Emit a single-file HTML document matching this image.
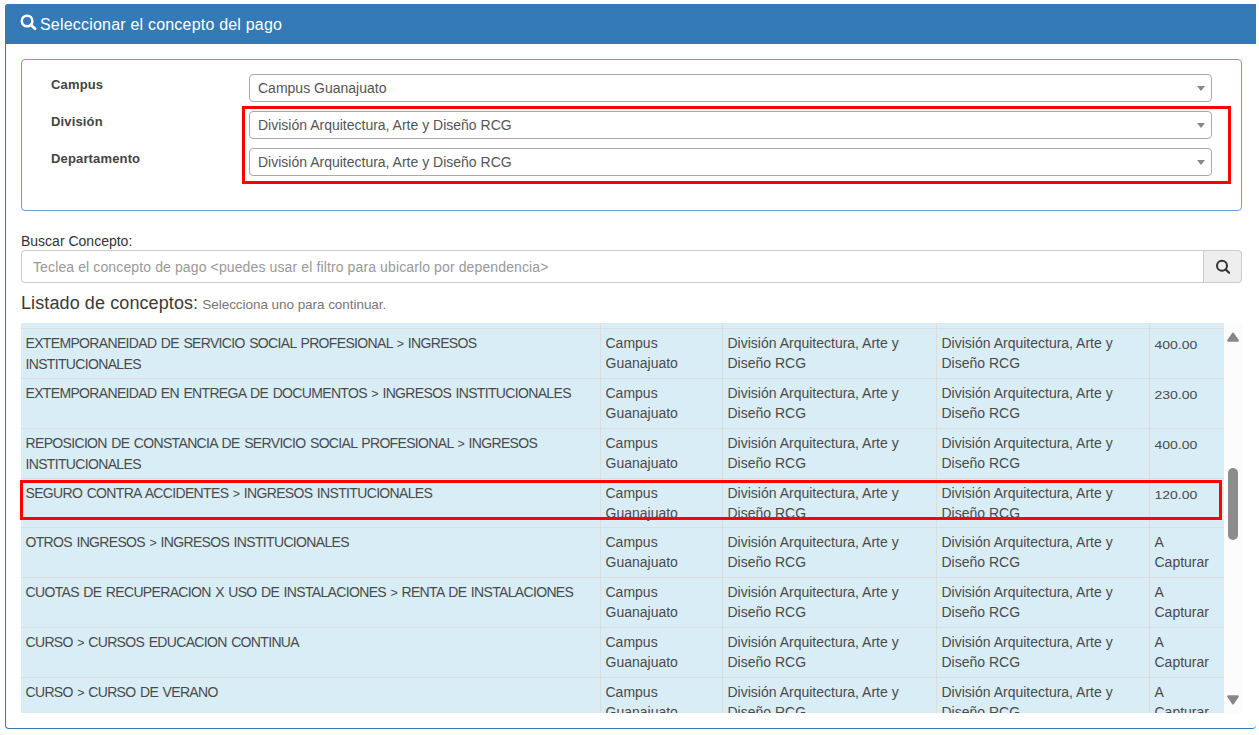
<!DOCTYPE html>
<html><head><meta charset="utf-8">
<style>
*{box-sizing:border-box;margin:0;padding:0}
html,body{width:1259px;height:735px;overflow:hidden;background:#fff}
body{font-family:"Liberation Sans",sans-serif;color:#333;position:relative}
.abs{position:absolute}
#panel{left:5px;top:4px;width:1251px;height:725px;border:1px solid #337ab7;border-radius:4px;border-right:none}
#head{left:5px;top:4px;width:1251px;height:40px;background:#337ab7;border-radius:3px 0 0 0}
#htxt{left:40px;top:15.5px;font-size:16px;color:#fff;line-height:18px;white-space:nowrap;letter-spacing:0.2px}
#inner{left:21px;top:59px;width:1221px;height:152px;border:1px solid #6c9fd6;border-radius:4px}
.lbl{left:51px;font-size:13px;font-weight:bold;color:#444;line-height:15px;white-space:nowrap;letter-spacing:0.15px}
.sel{left:249px;width:963px;height:28px;border:1px solid #aaa;border-radius:4px;background:#fff}
.sel span{position:absolute;left:8px;top:5px;font-size:14px;line-height:16px;color:#555;white-space:nowrap}
.sel i{position:absolute;right:6px;top:11px;width:0;height:0;border-left:4px solid transparent;border-right:4px solid transparent;border-top:5px solid #888}
.red{border:3px solid #f00}
#blbl{left:21px;top:233px;font-size:14px;line-height:16px;color:#333;white-space:nowrap}
#search{left:21px;top:250px;width:1221px;height:33px;border:1px solid #ccc;border-radius:4px;background:#fff}
#ph{left:11px;top:7.5px;font-size:14px;line-height:16px;color:#999;white-space:nowrap;letter-spacing:0.12px}
#addon{right:-1px;top:-1px;width:39px;height:33px;background:#eee;border:1px solid #ccc;border-radius:0 4px 4px 0}
#list{left:21px;top:293px;font-size:18px;line-height:20px;color:#3a3a3a;white-space:nowrap;letter-spacing:0.1px}
#list small{font-size:13.5px;color:#777;letter-spacing:-0.05px;margin-left:-1px}
#tbl{left:21px;top:323px;width:1203px;height:390px;overflow:hidden;background:#d9edf7}
.row{position:absolute;left:0;width:1203px;height:50px;border-top:1px solid #ddd}
.c{position:absolute;top:0;height:50px;padding:4px 5px 4px 4.5px;font-size:14px;line-height:20px;color:#4a4a4a}
.c1{left:0;width:579px;letter-spacing:-0.66px;word-spacing:1.2px}
.c2{left:579px;width:122px;border-left:1px solid #ddd}
.c3{left:701px;width:214px;border-left:1px solid #ddd}
.c4{left:915px;width:213px;border-left:1px solid #ddd}
.c5{left:1128px;width:75px;border-left:1px solid #ddd}
.num{display:inline-block;transform:translateY(1px) scaleY(0.8);transform-origin:50% 80%}
.gt{font-size:12.5px}
#sb{left:1224px;top:323px;width:19px;height:390px;background:#fcfcfc}
#thumb{left:1228px;top:468px;width:10px;height:72px;background:#8c8c8c;border-radius:5px}
</style></head><body>
<div id="panel" class="abs"></div>
<div id="head" class="abs"></div>
<svg class="abs" style="left:18px;top:12px" width="22" height="22" viewBox="0 0 22 22">
  <circle cx="9.1" cy="9.0" r="5.3" fill="none" stroke="#fff" stroke-width="2.5"/>
  <line x1="12.8" y1="12.8" x2="17.0" y2="16.8" stroke="#fff" stroke-width="2.9" stroke-linecap="round"/>
</svg>
<div id="htxt" class="abs">Seleccionar el concepto del pago</div>

<div id="inner" class="abs"></div>
<div class="abs lbl" style="top:77px">Campus</div>
<div class="abs lbl" style="top:114px">División</div>
<div class="abs lbl" style="top:151px">Departamento</div>
<div class="abs sel" style="top:74px"><span>Campus Guanajuato</span><i></i></div>
<div class="abs sel" style="top:111px"><span>División Arquitectura, Arte y Diseño RCG</span><i></i></div>
<div class="abs sel" style="top:148px"><span>División Arquitectura, Arte y Diseño RCG</span><i></i></div>
<div class="abs red" style="left:242px;top:106px;width:989px;height:78px"></div>

<div id="blbl" class="abs">Buscar Concepto:</div>
<div id="search" class="abs"><div id="ph" class="abs">Teclea el concepto de pago &lt;puedes usar el filtro para ubicarlo por dependencia&gt;</div>
<div id="addon" class="abs"><svg class="abs" style="left:9px;top:7px" width="18" height="18" viewBox="0 0 18 18">
  <circle cx="9" cy="7.8" r="5.0" fill="none" stroke="#333" stroke-width="2"/>
  <line x1="12.7" y1="11.5" x2="16.1" y2="14.8" stroke="#333" stroke-width="2.1" stroke-linecap="round"/>
</svg></div></div>
<div id="list" class="abs">Listado de conceptos: <small>Selecciona uno para continuar.</small></div>

<div id="tbl" class="abs">
<div class="row" style="top:-45px"><div class="c c1"></div><div class="c c2"></div><div class="c c3"></div><div class="c c4"></div><div class="c c5"></div></div>
<div class="row" style="top:5px"><div class="c c1">EXTEMPORANEIDAD DE SERVICIO SOCIAL PROFESIONAL <span class=gt>&gt;</span> INGRESOS INSTITUCIONALES</div><div class="c c2">Campus Guanajuato</div><div class="c c3">División Arquitectura, Arte y Diseño RCG</div><div class="c c4">División Arquitectura, Arte y Diseño RCG</div><div class="c c5"><span class=num>400.00</span></div></div>
<div class="row" style="top:55px"><div class="c c1">EXTEMPORANEIDAD EN ENTREGA DE DOCUMENTOS <span class=gt>&gt;</span> INGRESOS INSTITUCIONALES</div><div class="c c2">Campus Guanajuato</div><div class="c c3">División Arquitectura, Arte y Diseño RCG</div><div class="c c4">División Arquitectura, Arte y Diseño RCG</div><div class="c c5"><span class=num>230.00</span></div></div>
<div class="row" style="top:105px"><div class="c c1">REPOSICION DE CONSTANCIA DE SERVICIO SOCIAL PROFESIONAL <span class=gt>&gt;</span> INGRESOS INSTITUCIONALES</div><div class="c c2">Campus Guanajuato</div><div class="c c3">División Arquitectura, Arte y Diseño RCG</div><div class="c c4">División Arquitectura, Arte y Diseño RCG</div><div class="c c5"><span class=num>400.00</span></div></div>
<div class="row" style="top:155px"><div class="c c1">SEGURO CONTRA ACCIDENTES <span class=gt>&gt;</span> INGRESOS INSTITUCIONALES</div><div class="c c2">Campus Guanajuato</div><div class="c c3">División Arquitectura, Arte y Diseño RCG</div><div class="c c4">División Arquitectura, Arte y Diseño RCG</div><div class="c c5"><span class=num>120.00</span></div></div>
<div class="row" style="top:204px"><div class="c c1">OTROS INGRESOS <span class=gt>&gt;</span> INGRESOS INSTITUCIONALES</div><div class="c c2">Campus Guanajuato</div><div class="c c3">División Arquitectura, Arte y Diseño RCG</div><div class="c c4">División Arquitectura, Arte y Diseño RCG</div><div class="c c5">A Capturar</div></div>
<div class="row" style="top:254px"><div class="c c1">CUOTAS DE RECUPERACION X USO DE INSTALACIONES <span class=gt>&gt;</span> RENTA DE INSTALACIONES</div><div class="c c2">Campus Guanajuato</div><div class="c c3">División Arquitectura, Arte y Diseño RCG</div><div class="c c4">División Arquitectura, Arte y Diseño RCG</div><div class="c c5">A Capturar</div></div>
<div class="row" style="top:304px"><div class="c c1">CURSO <span class=gt>&gt;</span> CURSOS EDUCACION CONTINUA</div><div class="c c2">Campus Guanajuato</div><div class="c c3">División Arquitectura, Arte y Diseño RCG</div><div class="c c4">División Arquitectura, Arte y Diseño RCG</div><div class="c c5">A Capturar</div></div>
<div class="row" style="top:354px"><div class="c c1">CURSO <span class=gt>&gt;</span> CURSO DE VERANO</div><div class="c c2">Campus Guanajuato</div><div class="c c3">División Arquitectura, Arte y Diseño RCG</div><div class="c c4">División Arquitectura, Arte y Diseño RCG</div><div class="c c5">A Capturar</div></div>
</div>
<div id="sb" class="abs"></div>
<div id="thumb" class="abs"></div>
<svg class="abs" style="left:1226px;top:331px" width="14" height="12" viewBox="0 0 14 12"><path d="M7 2.6 L11.8 9.6 L2.2 9.6 Z" fill="#888" stroke="#888" stroke-width="2.2" stroke-linejoin="round"/></svg>
<svg class="abs" style="left:1226px;top:694px" width="14" height="12" viewBox="0 0 14 12"><path d="M2.2 2.4 L11.8 2.4 L7 9.4 Z" fill="#888" stroke="#888" stroke-width="2.2" stroke-linejoin="round"/></svg>
<div class="abs red" style="left:20px;top:480px;width:1202px;height:40px"></div>
</body></html>
